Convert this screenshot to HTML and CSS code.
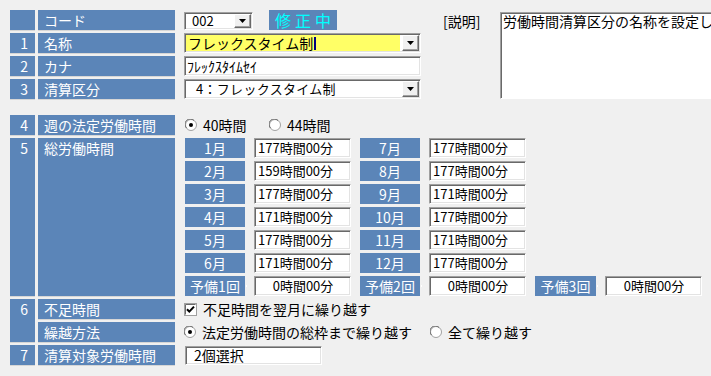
FILE: index.html
```html
<!DOCTYPE html>
<html lang="ja">
<head>
<meta charset="utf-8">
<title>労働時間清算区分</title>
<link rel="stylesheet" href="styles.css">
</head>
<body>
<div class="page">
  <div class="top">
    <div class="grid top-grid">
      <div class="num"></div>
      <div class="name">コード</div>
      <div class="ctl">
        <div class="combo code"><span class="val">002</span><span class="btn"><svg width="7" height="4" viewBox="0 0 7 4"><path d="M0 0h7L3.5 4z"/></svg></span></div>
        <div class="badge">修正中</div>
      </div>

      <div class="num">1</div>
      <div class="name">名称</div>
      <div class="ctl">
        <div class="combo full"><span class="val yellow">フレックスタイム制<span class="caret"></span></span><span class="btn"><svg width="7" height="4" viewBox="0 0 7 4"><path d="M0 0h7L3.5 4z"/></svg></span></div>
      </div>

      <div class="num">2</div>
      <div class="name">カナ</div>
      <div class="ctl">
        <div class="field full kana">ﾌﾚｯｸｽﾀｲﾑｾｲ</div>
      </div>

      <div class="num">3</div>
      <div class="name">清算区分</div>
      <div class="ctl">
        <div class="combo full"><span class="val kubun">4：フレックスタイム制</span><span class="btn"><svg width="7" height="4" viewBox="0 0 7 4"><path d="M0 0h7L3.5 4z"/></svg></span></div>
      </div>
    </div>

    <div class="desc">
      <span class="desc-label">[説明]</span>
      <div class="memo">労働時間清算区分の名称を設定します。</div>
    </div>
  </div>

  <div class="grid lower-grid">
    <div class="num">4</div>
    <div class="name">週の法定労働時間</div>
    <div class="ctl">
      <label class="opt w84"><svg class="radio" width="12" height="12" viewBox="0 0 12 12"><circle cx="6" cy="6" r="5.5" fill="#fff" stroke="#a0a0a0"/><path d="M1.5 9A5 5 0 0 1 9 1.5" fill="none" stroke="#696969"/><circle cx="6" cy="6" r="2" fill="#000"/></svg><span>40時間</span></label>
      <label class="opt"><svg class="radio" width="12" height="12" viewBox="0 0 12 12"><circle cx="6" cy="6" r="5.5" fill="#fff" stroke="#a0a0a0"/><path d="M1.5 9A5 5 0 0 1 9 1.5" fill="none" stroke="#696969"/></svg><span>44時間</span></label>
    </div>

    <div class="num">5</div>
    <div class="name">総労働時間</div>
    <div class="months">
      <div class="mlabel">1月</div><div class="field mval">177時間00分</div>
      <div class="mlabel">7月</div><div class="field mval">177時間00分</div>
      <div class="gap2"></div>

      <div class="mlabel">2月</div><div class="field mval">159時間00分</div>
      <div class="mlabel">8月</div><div class="field mval">177時間00分</div>
      <div class="gap2"></div>

      <div class="mlabel">3月</div><div class="field mval">177時間00分</div>
      <div class="mlabel">9月</div><div class="field mval">171時間00分</div>
      <div class="gap2"></div>

      <div class="mlabel">4月</div><div class="field mval">171時間00分</div>
      <div class="mlabel">10月</div><div class="field mval">177時間00分</div>
      <div class="gap2"></div>

      <div class="mlabel">5月</div><div class="field mval">177時間00分</div>
      <div class="mlabel">11月</div><div class="field mval">171時間00分</div>
      <div class="gap2"></div>

      <div class="mlabel">6月</div><div class="field mval">171時間00分</div>
      <div class="mlabel">12月</div><div class="field mval">177時間00分</div>
      <div class="gap2"></div>

      <div class="mlabel dot">予備1回</div><div class="field mval center">0時間00分</div>
      <div class="mlabel dot">予備2回</div><div class="field mval center">0時間00分</div>
      <div class="mlabel dot">予備3回</div><div class="field mval center">0時間00分</div>
    </div>

    <div class="num span2">6</div>
    <div class="name">不足時間</div>
    <div class="ctl">
      <label class="opt"><svg class="check" width="13" height="13" viewBox="0 0 13 13"><rect x="0.5" y="0.5" width="12" height="12" fill="#fff" stroke="#a0a0a0"/><path d="M1.5 11.5V1.5h10" fill="none" stroke="#696969"/><path d="M3 6.2l2.3 2.4L10 3.6" fill="none" stroke="#000" stroke-width="2"/></svg><span>不足時間を翌月に繰り越す</span></label>
    </div>

    <div class="name">繰越方法</div>
    <div class="ctl">
      <label class="opt w246"><svg class="radio" width="12" height="12" viewBox="0 0 12 12"><circle cx="6" cy="6" r="5.5" fill="#fff" stroke="#a0a0a0"/><path d="M1.5 9A5 5 0 0 1 9 1.5" fill="none" stroke="#696969"/><circle cx="6" cy="6" r="2" fill="#000"/></svg><span>法定労働時間の総枠まで繰り越す</span></label>
      <label class="opt"><svg class="radio" width="12" height="12" viewBox="0 0 12 12"><circle cx="6" cy="6" r="5.5" fill="#fff" stroke="#a0a0a0"/><path d="M1.5 9A5 5 0 0 1 9 1.5" fill="none" stroke="#696969"/></svg><span>全て繰り越す</span></label>
    </div>

    <div class="num">7</div>
    <div class="name">清算対象労働時間</div>
    <div class="ctl">
      <div class="field sel">2個選択</div>
    </div>
  </div>
</div>
</body>
</html>
```

FILE: styles.css
```css
html, body {
  margin: 0;
  padding: 0;
  background: #f0f0f0;
  overflow: hidden;
}

body {
  width: 711px;
  height: 376px;
  font-family: "Noto Sans CJK JP", "Noto Sans", sans-serif;
  font-size: 14px;
  line-height: 20px;
  color: #000;
}

.page {
  padding: 10px 0 0 10px;
}

.top {
  display: flex;
  align-items: flex-start;
}

.grid {
  display: grid;
  grid-template-columns: 25px 137px auto;
  column-gap: 3px;
  row-gap: 3px;
}

.top-grid {
  grid-template-columns: 25px 137px 243px;
  grid-auto-rows: 20px;
}

.num,
.name {
  background: #5b85b8;
  color: #fff;
  line-height: 20px;
  box-shadow: 0 1px 0 #d6d6d6;
}

.num {
  text-align: right;
  padding-right: 7px;
}

.name {
  padding-left: 6px;
}

.span2 {
  grid-row: span 2;
}

.ctl {
  display: flex;
  align-items: center;
  padding-left: 6px;
}

/* sunken fields */
.field,
.combo {
  box-sizing: border-box;
  background: #fff;
  border: 1px solid;
  border-color: #a0a0a0 #fff #fff #a0a0a0;
  box-shadow: inset 1px 1px 0 #696969, inset -1px -1px 0 #e3e3e3;
  white-space: nowrap;
}

.field {
  padding: 0 2px 0 3px;
  font-size: 13px;
  line-height: 18px;
  height: 20px;
}

.combo {
  display: flex;
  height: 20px;
  padding: 1px;
}

.combo .val {
  flex: 1;
  display: flex;
  align-items: center;
  padding-left: 2px;
}

.combo.code {
  width: 69px;
  height: 18px;
  margin-top: 2px;
  font-size: 13px;
}

.combo.code .val {
  padding-left: 6px;
}

.full {
  width: 237px;
}

.yellow {
  background: #ffff66;
  margin-right: 2px;
}

.caret {
  display: inline-block;
  width: 2px;
  height: 13px;
  background: #000080;
  margin-left: 1px;
}

.kubun {
  font-size: 13px;
  padding-left: 10px !important;
  letter-spacing: 0.3px;
}

.kana {
  font-size: 14px;
  padding-left: 2px;
}

.btn {
  box-sizing: border-box;
  width: 17px;
  display: flex;
  align-items: center;
  justify-content: center;
  background: #f0f0f0;
  border: 1px solid;
  border-color: #fff #696969 #696969 #fff;
  box-shadow: inset -1px -1px 0 #a0a0a0;
  flex: none;
}

.btn svg {
  display: block;
  fill: #000;
}

.badge {
  width: 68px;
  height: 20px;
  margin-left: 16px;
  background: #5b85b8;
  color: #00ffff;
  font-size: 16px;
  line-height: 20px;
  letter-spacing: 4px;
  text-align: center;
  padding-left: 4px;
  box-sizing: border-box;
}

/* description */
.desc {
  display: flex;
  align-items: flex-start;
  margin-left: 22px;
  margin-top: 2px;
}

.desc-label {
  width: 57px;
  line-height: 18px;
  flex: none;
}

.memo {
  box-sizing: border-box;
  width: 240px;
  height: 87px;
  flex: none;
  background: #fff;
  border: 1px solid;
  border-color: #a0a0a0 #fff #fff #a0a0a0;
  box-shadow: inset 1px 1px 0 #696969;
  padding: 0 0 0 2px;
  line-height: 17px;
  white-space: nowrap;
  overflow: hidden;
}

/* lower section */
.lower-grid {
  margin-top: 16px;
  grid-template-rows: 20px 158px 20px 20px 20px;
}

.months {
  display: grid;
  grid-template-columns: 60px 97px 60px 97px 61px 98px;
  grid-auto-rows: 20px;
  column-gap: 9px;
  row-gap: 3px;
  padding-left: 7px;
}

.gap2 {
  grid-column: span 2;
}

.mlabel {
  background: #5b85b8;
  color: #fff;
  text-align: center;
  line-height: 20px;
  white-space: nowrap;
}

.dot {
  position: relative;
}

.dot::after {
  content: "";
  position: absolute;
  right: -2px;
  top: 9px;
  width: 1px;
  height: 2px;
  background: #fff;
}

.mval {
  width: 97px;
}

.center {
  text-align: center;
}

.opt {
  display: flex;
  align-items: center;
  gap: 6px;
  white-space: nowrap;
}

.opt svg {
  display: block;
  flex: none;
}

.w84 {
  width: 84px;
  margin-left: 1px;
}

.w246 {
  width: 246px;
}

.sel {
  width: 137px;
  height: 19px;
  margin-left: 1px;
  padding-left: 8px;
  font-size: 14px;
  line-height: 17px;
}
```
